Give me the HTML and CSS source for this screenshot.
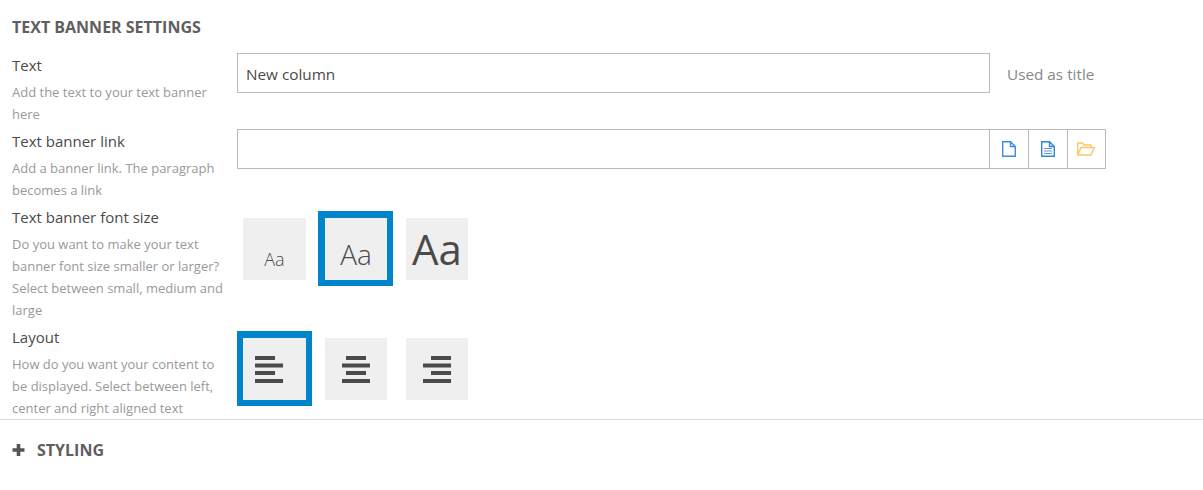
FILE: index.html
```html
<!DOCTYPE html>
<html lang="en">
<head>
    <meta charset="utf-8">
    <title>Text banner settings</title>
    <link rel="stylesheet" href="styles.css">
</head>
<body>
    <h2 class="titulo">TEXT BANNER SETTINGS</h2>

    <div class="fila">
        <div class="etiqueta">
            <div class="nombre">Text</div>
            <div class="ayuda">Add the text to your text banner<br>here</div>
        </div>
        <div class="control control-input">
            <div class="campo campo-texto">New column</div>
            <span class="nota">Used as title</span>
        </div>
    </div>

    <div class="fila">
        <div class="etiqueta">
            <div class="nombre">Text banner link</div>
            <div class="ayuda">Add a banner link. The paragraph<br>becomes a link</div>
        </div>
        <div class="control control-input">
            <div class="campo campo-link">
                <div class="link-vacio"></div>
                <div class="boton">
                    <svg class="icono" viewBox="0 0 14 16"><path d="M.7 .7H8.5L13.300 5.500V15.300H.7Z M8.500 .7V5.500H13.300" fill="none" stroke="#3a8fdc" stroke-width="1.400"/></svg>
                </div>
                <div class="boton">
                    <svg class="icono" viewBox="0 0 14 16"><path d="M.7 .7H8.5L13.300 5.500V15.300H.7Z M8.500 .7V5.500H13.300" fill="none" stroke="#2f86d6" stroke-width="1.400"/><path d="M3 7.500H11M3 10H11M3 12.500H11" fill="none" stroke="#6a8fd0" stroke-width="1.200"/></svg>
                </div>
                <div class="boton">
                    <svg class="icono-carpeta" viewBox="0 0 18 14"><path d="M.7 13V1H5.500L7 3H14V5.500 M.7 13L4 5.500H17.300L14 13Z" fill="none" stroke="#ffc561" stroke-width="1.400" stroke-linejoin="round"/></svg>
                </div>
            </div>
        </div>
    </div>

    <div class="fila">
        <div class="etiqueta">
            <div class="nombre">Text banner font size</div>
            <div class="ayuda">Do you want to make your text<br>banner font size smaller or larger?<br>Select between small, medium and<br>large</div>
        </div>
        <div class="control control-tiles">
            <div class="tile"><span class="aa aa-s">Aa</span></div>
            <div class="tile activo"><span class="aa aa-m">Aa</span></div>
            <div class="tile"><span class="aa aa-l">Aa</span></div>
        </div>
    </div>

    <div class="fila ultima">
        <div class="etiqueta">
            <div class="nombre">Layout</div>
            <div class="ayuda">How do you want your content to<br>be displayed. Select between left,<br>center and right aligned text</div>
        </div>
        <div class="control control-tiles">
            <div class="tile activo">
                <svg class="barras barras-izq" viewBox="0 0 28 27"><path d="M0 0H20V4H0ZM0 7.500H28V11.500H0ZM0 15H20V19H0ZM0 23H28V27H0Z" fill="#4a4a4a"/></svg>
            </div>
            <div class="tile">
                <svg class="barras" viewBox="0 0 28 27"><path d="M4 0H24V4H4ZM0 7.500H28V11.500H0ZM4 15H24V19H4ZM0 23H28V27H0Z" fill="#4a4a4a"/></svg>
            </div>
            <div class="tile">
                <svg class="barras" viewBox="0 0 28 27"><path d="M8 0H28V4H8ZM0 7.500H28V11.500H0ZM8 15H28V19H8ZM0 23H28V27H0Z" fill="#4a4a4a"/></svg>
            </div>
        </div>
    </div>

    <div class="pie">
        <svg class="mas" viewBox="0 0 12 12"><path d="M4.200 0H7.800V4.200H12V7.800H7.800V12H4.200V7.800H0V4.200H4.200Z" fill="#555"/></svg>
        <span class="pie-texto">STYLING</span>
    </div>
</body>
</html>
```
FILE: styles.css
```css
body {
    margin: 0;
    background-color: #fff;
    font-family: "Open Sans", "Noto Sans", sans-serif;
    color: #444;
    overflow: hidden;
}
.titulo {
    margin: 0;
    padding: 16px 12px 0;
    height: 38px;
    font-size: 16px;
    line-height: 22px;
    font-weight: 700;
    color: #5f5f5f;
}
.fila {
    display: flex;
    margin-bottom: 5px;
}
.fila.ultima {
    margin-bottom: 0;
}
.etiqueta {
    width: 225px;
    padding-left: 12px;
    flex: none;
}
.nombre {
    height: 27px;
    font-size: 15px;
    line-height: 23px;
    color: #4a4a4a;
}
.ayuda {
    font-size: 13px;
    line-height: 22px;
    color: #999;
    white-space: nowrap;
}
.control {
    display: flex;
}
.control-input {
    align-items: center;
    height: 40px;
    margin-top: -1px;
}
.campo {
    box-sizing: border-box;
    height: 40px;
    border: 1px solid #bbb;
    background-color: #fff;
}
.campo-texto {
    width: 753px;
    padding-left: 8px;
    font-size: 15.300px;
    line-height: 40px;
    color: #4a4a4a;
}
.nota {
    margin-left: 17px;
    padding-top: 2px;
    font-size: 15.300px;
    color: #888;
}
.campo-link {
    display: flex;
    width: 869px;
}
.link-vacio {
    flex: 1;
}
.boton {
    display: flex;
    align-items: center;
    justify-content: center;
    width: 39px;
    border-left: 1px solid #bbb;
    box-sizing: border-box;
}
.boton:last-child {
    width: 38px;
}
.icono {
    width: 14px;
    height: 16px;
    margin-right: 1px;
}
.icono-carpeta {
    width: 18px;
    height: 14px;
    margin-right: 2px;
}
.control-tiles {
    gap: 6px;
    margin-top: 5px;
}
.tile {
    box-sizing: border-box;
    display: flex;
    align-items: center;
    justify-content: center;
    width: 75px;
    height: 75px;
    border-style: solid;
    border-color: transparent;
    border-width: 7px 6px 6px 7px;
    background-color: #efefef;
    background-clip: padding-box;
}
.tile:first-child {
    border-left-width: 6px;
}
.tile.activo {
    border-color: #0085ca;
}
.aa {
    display: block;
    width: 100%;
    text-align: center;
    font-weight: 350;
    color: #4a4a4a;
}
.aa-s {
    font-size: 18px;
    line-height: 24px;
    padding-top: 20px;
}
.aa-m {
    font-size: 28px;
    line-height: 38px;
    padding-top: 9px;
}
.aa-l {
    font-size: 42px;
    line-height: 56px;
    font-weight: 400;
}
.barras {
    width: 28px;
    height: 27px;
}
.barras-izq {
    margin-right: 11px;
}
.pie {
    display: flex;
    align-items: center;
    height: 59px;
    padding-left: 12px;
    padding-bottom: 2px;
    border-top: 1px solid #ddd;
}
.mas {
    width: 13px;
    height: 12px;
}
.pie-texto {
    margin-left: 12px;
    font-size: 16px;
    font-weight: 700;
    color: #5f5f5f;
}
```
